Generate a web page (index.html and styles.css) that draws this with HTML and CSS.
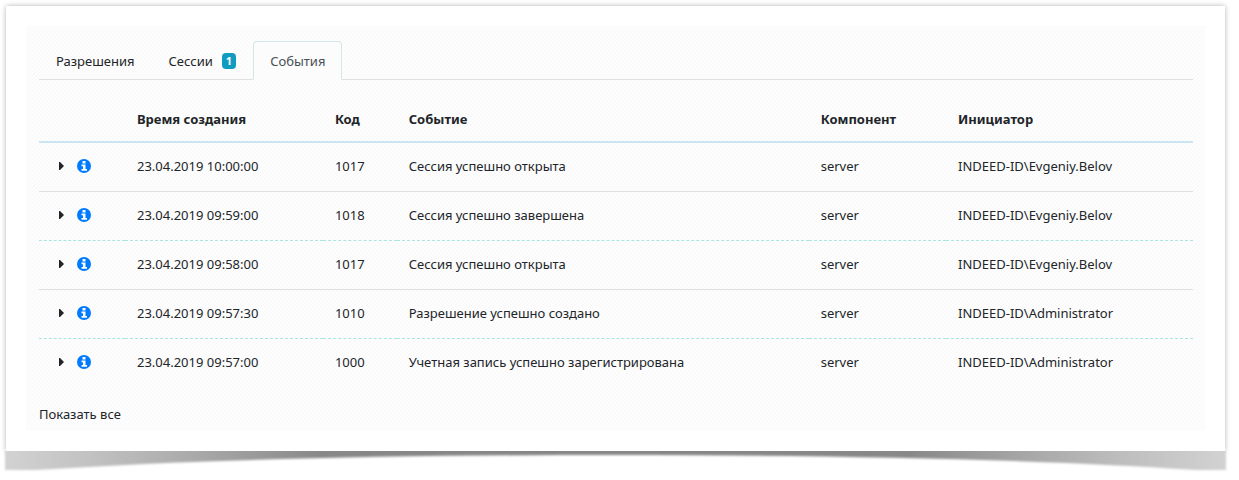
FILE: index.html
```html
<!DOCTYPE html>
<html lang="ru">
    <head>
        <meta charset="UTF-8">
        <meta name="viewport" content="width=device-width, initial-scale=1.0">
        <title>События</title>
        <link rel="stylesheet" href="styles.css">
    </head>

    <body>
        <!-- общие иконки строк -->
        <svg class="sprite" aria-hidden="true">
            <symbol id="icon-caret" viewBox="0 0 5 8">
                <path fill="currentColor" d="M0 0h1l4 4-4 4H0z"/>
            </symbol>
            <symbol id="icon-info" viewBox="0 0 14 14">
                <circle cx="7" cy="7" r="7" fill="currentColor"/>
                <path fill="#fff" d="M5.500 2h3v2.500h-3zM4.500 5.500h4V10H10v1.800H4.500V10H6V7.200H4.500z"/>
            </symbol>
        </svg>

        <main class="card">
            <section class="panel">
                <nav class="tabs">
                    <a class="tab" href="#">Разрешения</a>
                    <a class="tab" href="#">Сессии <span class="badge">1</span></a>
                    <a class="tab active" href="#" aria-current="page">События</a>
                </nav>

                <table class="events">
                    <thead>
                        <tr>
                            <th class="col-tools"></th>
                            <th class="col-time">Время создания</th>
                            <th class="col-code">Код</th>
                            <th class="col-event">Событие</th>
                            <th class="col-component">Компонент</th>
                            <th>Инициатор</th>
                        </tr>
                    </thead>
                    <tbody>
                        <tr>
                            <td><div class="tools"><button class="toggle" aria-label="Развернуть"><svg class="caret"><use href="#icon-caret"/></svg></button><svg class="info"><use href="#icon-info"/></svg></div></td>
                            <td>23.04.2019 10:00:00</td>
                            <td>1017</td>
                            <td>Сессия успешно открыта</td>
                            <td>server</td>
                            <td>INDEED-ID\Evgeniy.Belov</td>
                        </tr>
                        <tr>
                            <td><div class="tools"><button class="toggle" aria-label="Развернуть"><svg class="caret"><use href="#icon-caret"/></svg></button><svg class="info"><use href="#icon-info"/></svg></div></td>
                            <td>23.04.2019 09:59:00</td>
                            <td>1018</td>
                            <td>Сессия успешно завершена</td>
                            <td>server</td>
                            <td>INDEED-ID\Evgeniy.Belov</td>
                        </tr>
                        <tr>
                            <td><div class="tools"><button class="toggle" aria-label="Развернуть"><svg class="caret"><use href="#icon-caret"/></svg></button><svg class="info"><use href="#icon-info"/></svg></div></td>
                            <td>23.04.2019 09:58:00</td>
                            <td>1017</td>
                            <td>Сессия успешно открыта</td>
                            <td>server</td>
                            <td>INDEED-ID\Evgeniy.Belov</td>
                        </tr>
                        <tr>
                            <td><div class="tools"><button class="toggle" aria-label="Развернуть"><svg class="caret"><use href="#icon-caret"/></svg></button><svg class="info"><use href="#icon-info"/></svg></div></td>
                            <td>23.04.2019 09:57:30</td>
                            <td>1010</td>
                            <td>Разрешение успешно создано</td>
                            <td>server</td>
                            <td>INDEED-ID\Administrator</td>
                        </tr>
                        <tr>
                            <td><div class="tools"><button class="toggle" aria-label="Развернуть"><svg class="caret"><use href="#icon-caret"/></svg></button><svg class="info"><use href="#icon-info"/></svg></div></td>
                            <td>23.04.2019 09:57:00</td>
                            <td>1000</td>
                            <td>Учетная запись успешно зарегистрирована</td>
                            <td>server</td>
                            <td>INDEED-ID\Administrator</td>
                        </tr>
                    </tbody>
                </table>

                <a class="show-all" href="#">Показать все</a>
            </section>
        </main>

        <!-- изогнутая тень под карточкой -->
        <svg class="curl" viewBox="0 0 1239 28" preserveAspectRatio="none" aria-hidden="true">
            <defs>
                <linearGradient id="curl-fill">
                    <stop offset="0" stop-color="#d2d2d2"/>
                    <stop offset=".08" stop-color="#bfbfbf"/>
                    <stop offset=".16" stop-color="#a8a8a8"/>
                    <stop offset=".26" stop-color="#888"/>
                    <stop offset=".5" stop-color="#868686"/>
                    <stop offset=".74" stop-color="#888"/>
                    <stop offset=".84" stop-color="#a8a8a8"/>
                    <stop offset=".92" stop-color="#bfbfbf"/>
                    <stop offset="1" stop-color="#d2d2d2"/>
                </linearGradient>
                <filter id="curl-blur" x="-2%" y="-50%" width="104%" height="200%">
                    <feGaussianBlur stdDeviation="1.300"/>
                </filter>
            </defs>
            <path fill="url(#curl-fill)" filter="url(#curl-blur)" d="M5-10V19H36C200 8 400 4 616 4s416 4 580 15H1226V-10z"/>
        </svg>
    </body>
</html>
```

FILE: styles.css
```css
*{
    box-sizing: border-box;
}

body{
    margin: 0;
    background: #fff;
    color: #212529;
    font-family: "Noto Sans", "Open Sans", sans-serif;
    font-size: 13px;
    line-height: 20px;
}

a{
    color: inherit;
    text-decoration: none;
}

.sprite{
    display: none;
}

.card{
    margin: 6px 14px 0 6px;
    padding: 20px;
    background: #fff;
    box-shadow: 0 0 5px rgba(0, 0, 0, .3);
}

.panel{
    padding: 15px 12px 7px 13px;
    background: linear-gradient(135deg, #fdfdfd 40%, #f8f8f8 40%, #f8f8f8 60%, #fdfdfd 60%) 0 0 / 4px 4px;
}

/* вкладки */
.tabs{
    display: flex;
    border-bottom: 1px solid #dee0e2;
}

.tab{
    display: flex;
    align-items: center;
    gap: 9px;
    height: 39px;
    margin-bottom: -1px;
    padding: 0 16px;
    border: 1px solid transparent;
    border-radius: 4px 4px 0 0;
}

.tab.active{
    color: #495057;
    background: #fcfcfc;
    border-color: #d2e8e8 #d2e8e8 #fcfcfc;
}

.badge{
    padding: 0 4px;
    border-radius: 4px;
    background: #109bc0;
    color: #fff;
    font-size: 11px;
    font-weight: bold;
    line-height: 16px;
}

/* таблица событий */
.events{
    width: 100%;
    margin-top: 16px;
    border-collapse: collapse;
    table-layout: fixed;
}

.events th,
.events td{
    padding: 13px 12px 15px;
    text-align: left;
    white-space: nowrap;
}

.events th{
    padding: 13px 12px 12px;
    border-bottom: 2px solid #c9e6f2;
}

.events tbody tr + tr td{
    border-top: 1px solid #dee0e2;
}

.events tbody tr:nth-child(odd):not(:first-child) td{
    border-top: 1px dashed #a9e6e2;
}

.col-tools{
    width: 7.45%;
}

.col-time{
    width: 17.15%;
}

.col-code{
    width: 6.4%;
}

.col-event{
    width: 35.7%;
}

.col-component{
    width: 11.9%;
}

.tools{
    display: flex;
    align-items: center;
    gap: 6px;
}

.toggle{
    display: flex;
    justify-content: center;
    width: 20px;
    padding: 4px 0;
    border: none;
    background: none;
    color: #212529;
    cursor: pointer;
}

.caret{
    width: 5px;
    height: 8px;
}

.info{
    width: 14px;
    height: 14px;
    color: #007bff;
}

.show-all{
    display: inline-block;
    margin-top: 17px;
}

.curl{
    display: block;
    width: 100%;
    height: 28px;
}
```
